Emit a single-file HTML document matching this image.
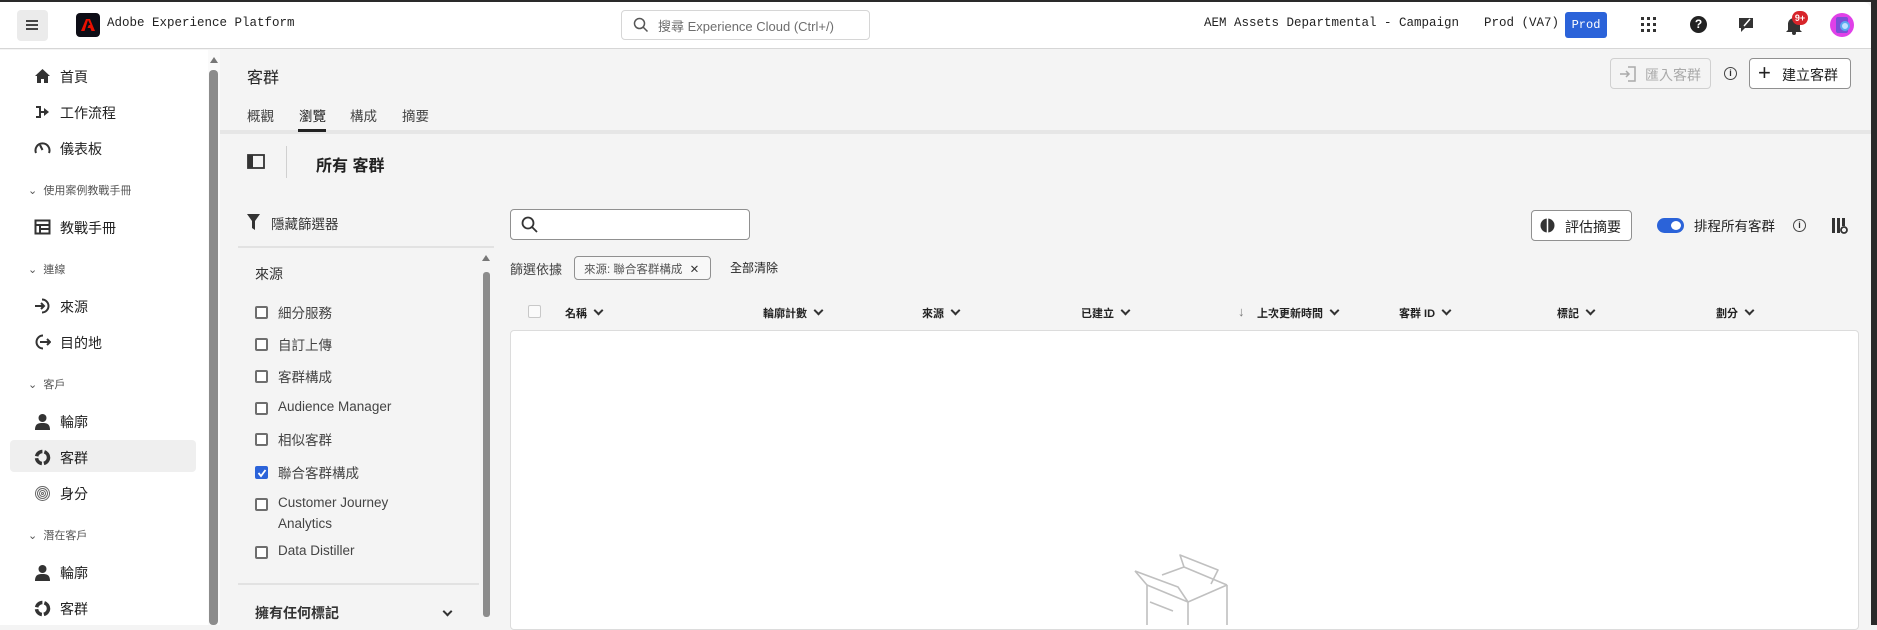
<!DOCTYPE html>
<html><head><meta charset="utf-8">
<style>
*{box-sizing:border-box;margin:0;padding:0}
body{width:1877px;height:625px;overflow:hidden;background:#f4f4f4;font-family:"Liberation Sans","Noto Sans CJK TC",sans-serif;color:#2c2c2c;position:relative;font-size:13px}
.a{position:absolute;white-space:nowrap}
.mono{font-family:"Liberation Mono","Noto Serif CJK SC",monospace;font-size:12.5px;color:#222}
.nav{font-size:14px;color:#222}
.sec{font-size:11px;color:#555}
.cb{position:absolute;width:13px;height:13px;border:2px solid #6e6e6e;border-radius:2px;background:#fff}
.it{font-size:13.5px;color:#444}
.th{font-size:11px;font-weight:bold;color:#222}
.chev{display:inline-block;width:7px;height:7px;border-right:2px solid #333;border-bottom:2px solid #333;transform:rotate(45deg);margin-left:8px;position:relative;top:-3px}
.btn{position:absolute;border:1px solid #909090;border-radius:4px;background:#fff;font-size:14px}
</style></head><body>
<div class="a" style="left:0;top:0;width:1877px;height:2px;background:#2a2a2a"></div>
<div class="a" style="left:1871px;top:0;width:6px;height:625px;background:#2a2a2a"></div>
<div class="a" style="left:0;top:2px;width:1871px;height:47px;background:#fff;border-bottom:1px solid #d6d6d6;border-top-right-radius:8px"></div>
<div class="a" style="left:17px;top:10px;width:31px;height:31px;background:#ebebeb;border-radius:4px"></div>
<div class="a" style="left:26px;top:20px;width:12px;height:2px;background:#444;box-shadow:0 4px 0 #444,0 8px 0 #444"></div>
<div class="a" style="left:76px;top:13px;width:24px;height:24px;background:#0d0d16;border-radius:4px"></div>
<svg class="a" style="left:80px;top:17px" width="16" height="16" viewBox="0 0 16 16"><path d="M6 2h4l5 12h-3.5l-1.2-3H7.5l1.3-3h1.6L8 3 4.5 14H1z" fill="#eb1000"/></svg>
<div class="a mono" style="left:107px;top:16px">Adobe Experience Platform</div>
<div class="a" style="left:621px;top:10px;width:249px;height:30px;border:1px solid #d6d6d6;border-radius:4px;background:#fff"></div>
<svg class="a" style="left:633px;top:17px" width="16" height="16"><circle cx="6.5" cy="6.5" r="5" fill="none" stroke="#555" stroke-width="1.5"/><path d="M10 10l4.5 4.5" stroke="#555" stroke-width="1.5"/></svg>
<div class="a" style="left:658px;top:16px;font-size:13px;color:#6e6e6e">搜尋 Experience Cloud (Ctrl+/)</div>
<div class="a mono" style="left:1204px;top:16px">AEM Assets Departmental - Campaign</div>
<div class="a mono" style="left:1484px;top:16px">Prod (VA7)</div>
<div class="a mono" style="left:1565px;top:12px;width:42px;height:26px;background:#2b63d9;border-radius:3px;color:#fff;text-align:center;line-height:26px;font-size:12px">Prod</div>
<svg class="a" style="left:1640px;top:16px" width="18" height="18"><g fill="#333"><rect x="1" y="1" width="3" height="3"/><rect x="7" y="1" width="3" height="3"/><rect x="13" y="1" width="3" height="3"/><rect x="1" y="7" width="3" height="3"/><rect x="7" y="7" width="3" height="3"/><rect x="13" y="7" width="3" height="3"/><rect x="1" y="13" width="3" height="3"/><rect x="7" y="13" width="3" height="3"/><rect x="13" y="13" width="3" height="3"/></g></svg>
<div class="a" style="left:1690px;top:16px;width:17px;height:17px;border-radius:50%;background:#222;color:#fff;font-size:12px;font-weight:bold;text-align:center;line-height:17px">?</div>
<svg class="a" style="left:1737px;top:15px" width="20" height="20"><path d="M2 3h14v10H8l-4 4v-4H2z" fill="#333"/><path d="M7 11l6-7" stroke="#fff" stroke-width="1.5"/></svg>
<svg class="a" style="left:1784px;top:15px" width="20" height="20"><path d="M4 15V9a6 6 0 0 1 12 0v6l2 2H2z" fill="#333"/><circle cx="10" cy="18" r="2" fill="#333"/></svg>
<div class="a" style="left:1792px;top:11px;width:16px;height:14px;background:#d7252b;border-radius:7px;color:#fff;font-size:9px;font-weight:bold;text-align:center;line-height:14px">9+</div>
<div class="a" style="left:1830px;top:13px;width:24px;height:24px;border-radius:50%;background:#e040e8"></div>
<div class="a" style="left:1836px;top:17px;width:12px;height:16px;background:#7b4fd6;border-radius:2px"></div>
<div class="a" style="left:1840px;top:21px;width:10px;height:10px;border-radius:50%;border:2px solid #5aa8f0;background:#bfe0ff"></div>
<div class="a" style="left:0;top:50px;width:208px;height:575px;background:#fff"></div>
<div class="a" style="left:208px;top:50px;width:12px;height:575px;background:#fafafa"></div>
<div class="a" style="left:209px;top:70px;width:9px;height:555px;background:#8c8c8c;border-radius:4px"></div>
<div class="a" style="left:210px;top:57px;width:0;height:0;border-left:4px solid transparent;border-right:4px solid transparent;border-bottom:6px solid #777"></div>
<div class="a" style="left:10px;top:440px;width:186px;height:32px;background:#efefef;border-radius:4px"></div>
<svg class="a" style="left:34px;top:68px" width="17" height="16"><path d="M8.5 1L1 8h2v7h4v-4h3v4h4V8h2z" fill="#333"/></svg>
<svg class="a" style="left:34px;top:104px" width="17" height="16"><path d="M2 2h5v5h3V4l5 4-5 4V9H7v5H2v-2h3V4H2z" fill="#333"/></svg>
<svg class="a" style="left:34px;top:140px" width="17" height="16"><path d="M2 13A7 7 0 1 1 15 13" fill="none" stroke="#333" stroke-width="2"/><path d="M8.5 10L6 5" stroke="#333" stroke-width="2"/></svg>
<svg class="a" style="left:34px;top:219px" width="17" height="16"><rect x="1.5" y="1.5" width="14" height="13" fill="none" stroke="#333" stroke-width="2"/><path d="M1.5 6h14M6 6v8.5M6 10h9" stroke="#333" stroke-width="2"/></svg>
<svg class="a" style="left:34px;top:298px" width="17" height="16"><path d="M8 1.5A6.5 6.5 0 1 1 8 14.5" fill="none" stroke="#333" stroke-width="2"/><path d="M1 8h9M7 5l3 3-3 3" fill="none" stroke="#333" stroke-width="2"/></svg>
<svg class="a" style="left:34px;top:334px" width="17" height="16"><path d="M9 1.5A6.5 6.5 0 1 0 9 14.5" fill="none" stroke="#333" stroke-width="2"/><path d="M6 8h10M13 5l3 3-3 3" fill="none" stroke="#333" stroke-width="2"/></svg>
<svg class="a" style="left:34px;top:413px" width="17" height="17"><circle cx="8.5" cy="5" r="4" fill="#333"/><path d="M1 17c0-6 3-7 7.5-7S16 11 16 17z" fill="#333"/></svg>
<svg class="a" style="left:34px;top:449px" width="17" height="17"><circle cx="8.5" cy="8.5" r="6" fill="none" stroke="#333" stroke-width="3.5" stroke-dasharray="8 2"/></svg>
<svg class="a" style="left:34px;top:485px" width="17" height="17"><g fill="none" stroke="#666" stroke-width="1"><circle cx="8.5" cy="8.5" r="7"/><circle cx="8.5" cy="8.5" r="5"/><circle cx="8.5" cy="8.5" r="3"/><circle cx="8.5" cy="8.5" r="1"/></g></svg>
<svg class="a" style="left:34px;top:564px" width="17" height="17"><circle cx="8.5" cy="5" r="4" fill="#333"/><path d="M1 17c0-6 3-7 7.5-7S16 11 16 17z" fill="#333"/></svg>
<svg class="a" style="left:34px;top:600px" width="17" height="17"><circle cx="8.5" cy="8.5" r="6" fill="none" stroke="#333" stroke-width="3.5" stroke-dasharray="8 2"/></svg>
<div class="a nav" style="left:60px;top:67px">首頁</div>
<div class="a nav" style="left:60px;top:103px">工作流程</div>
<div class="a nav" style="left:60px;top:139px">儀表板</div>
<div class="a sec" style="left:28px;top:182px">⌄&nbsp;&nbsp;使用案例教戰手冊</div>
<div class="a nav" style="left:60px;top:218px">教戰手冊</div>
<div class="a sec" style="left:28px;top:261px">⌄&nbsp;&nbsp;連線</div>
<div class="a nav" style="left:60px;top:297px">來源</div>
<div class="a nav" style="left:60px;top:333px">目的地</div>
<div class="a sec" style="left:28px;top:376px">⌄&nbsp;&nbsp;客戶</div>
<div class="a nav" style="left:60px;top:412px">輪廓</div>
<div class="a nav" style="left:60px;top:448px">客群</div>
<div class="a nav" style="left:60px;top:484px">身分</div>
<div class="a sec" style="left:28px;top:527px">⌄&nbsp;&nbsp;潛在客戶</div>
<div class="a nav" style="left:60px;top:563px">輪廓</div>
<div class="a nav" style="left:60px;top:599px">客群</div>
<div class="a" style="left:247px;top:64px;font-size:16px;color:#222">客群</div>
<div class="a" style="left:247px;top:105px;font-size:13.5px;color:#444">概觀</div>
<div class="a" style="left:299px;top:105px;font-size:13.5px;color:#222">瀏覽</div>
<div class="a" style="left:350px;top:105px;font-size:13.5px;color:#444">構成</div>
<div class="a" style="left:402px;top:105px;font-size:13.5px;color:#444">摘要</div>
<div class="a" style="left:220px;top:130px;width:1651px;height:4px;background:#e6e6e6"></div>
<div class="a" style="left:298px;top:129px;width:28px;height:3px;background:#222"></div>
<div class="btn" style="left:1610px;top:58px;width:101px;height:31px;border-color:#d0d0d0;background:#f4f4f4;color:#aaa;padding:6px 0 0 34px">匯入客群</div>
<svg class="a" style="left:1619px;top:65px" width="18" height="18"><path d="M1 9h9M7 6l3 3-3 3" fill="none" stroke="#aaa" stroke-width="1.5"/><path d="M9 2h7v14H9" fill="none" stroke="#aaa" stroke-width="1.5"/></svg>
<div class="a" style="left:1724px;top:67px;width:13px;height:13px;border:1.5px solid #444;border-radius:50%;font-size:9px;text-align:center;line-height:10px;font-weight:bold">i</div>
<div class="btn" style="left:1749px;top:58px;width:102px;height:31px;color:#222;padding:6px 0 0 32px">建立客群</div>
<div class="a" style="left:1758px;top:60px;font-size:22px;color:#222">+</div>
<svg class="a" style="left:247px;top:154px" width="18" height="15"><rect x="1" y="1" width="16" height="13" fill="none" stroke="#333" stroke-width="1.8"/><rect x="1" y="1" width="5" height="13" fill="#333"/></svg>
<div class="a" style="left:286px;top:146px;width:1px;height:32px;background:#d0d0d0"></div>
<div class="a" style="left:316px;top:152px;font-size:16px;font-weight:bold;color:#222">所有 客群</div>
<svg class="a" style="left:247px;top:214px" width="13" height="16"><path d="M0 0h13L8 7v9l-3-2V7z" fill="#333"/></svg>
<div class="a" style="left:271px;top:213px;font-size:13.5px;color:#333">隱藏篩選器</div>
<div class="a" style="left:238px;top:246px;width:256px;height:2px;background:#e2e2e2"></div>
<div class="a" style="left:483px;top:272px;width:7px;height:345px;background:#8c8c8c;border-radius:3px"></div>
<div class="a" style="left:482px;top:255px;width:0;height:0;border-left:4px solid transparent;border-right:4px solid transparent;border-bottom:6px solid #777"></div>
<div class="a" style="left:255px;top:264px;font-size:14px;color:#333">來源</div>
<div class="cb" style="left:255px;top:306px"></div><div class="a it" style="left:278px;top:302px">細分服務</div>
<div class="cb" style="left:255px;top:338px"></div><div class="a it" style="left:278px;top:334px">自訂上傳</div>
<div class="cb" style="left:255px;top:370px"></div><div class="a it" style="left:278px;top:366px">客群構成</div>
<div class="cb" style="left:255px;top:402px"></div><div class="a it" style="left:278px;top:399px">Audience Manager</div>
<div class="cb" style="left:255px;top:433px"></div><div class="a it" style="left:278px;top:429px">相似客群</div>
<div class="cb" style="left:255px;top:466px;background:#2b63d9;border-color:#2b63d9"></div><svg class="a" style="left:257px;top:468px" width="10" height="10"><path d="M1.5 5l2.5 3 4.5-6" fill="none" stroke="#fff" stroke-width="1.8"/></svg><div class="a it" style="left:278px;top:462px">聯合客群構成</div>
<div class="cb" style="left:255px;top:498px"></div><div class="a it" style="left:278px;top:495px">Customer Journey</div>
<div class="a it" style="left:278px;top:516px">Analytics</div>
<div class="cb" style="left:255px;top:546px"></div><div class="a it" style="left:278px;top:543px">Data Distiller</div>
<div class="a" style="left:238px;top:583px;width:241px;height:2px;background:#e2e2e2"></div>
<div class="a" style="left:255px;top:603px;font-size:14px;font-weight:bold;color:#333">擁有任何標記</div>
<div class="a" style="left:444px;top:606px"><span class="chev" style="margin:0"></span></div>
<div class="a" style="left:510px;top:209px;width:240px;height:31px;border:1px solid #909090;border-radius:4px;background:#fff"></div>
<svg class="a" style="left:521px;top:216px" width="17" height="17"><circle cx="7" cy="7" r="5.5" fill="none" stroke="#333" stroke-width="1.8"/><path d="M11 11l5 5" stroke="#333" stroke-width="1.8"/></svg>
<div class="a" style="left:510px;top:259px;font-size:13px;color:#444">篩選依據</div>
<div class="a" style="left:574px;top:256px;width:137px;height:24px;border:1px solid #909090;border-radius:4px;background:#f8f8f8;font-size:11.5px;color:#555;padding:4px 0 0 9px">來源: 聯合客群構成 <span style="color:#333;margin-left:4px">✕</span></div>
<div class="a" style="left:730px;top:259px;font-size:12px;color:#222">全部清除</div>
<div class="btn" style="left:1531px;top:210px;width:101px;height:31px;color:#222;padding:6px 0 0 33px">評估摘要</div>
<svg class="a" style="left:1540px;top:218px" width="15" height="15"><circle cx="7.5" cy="7.5" r="7" fill="#333"/><path d="M7.5 0.5v14" stroke="#fff" stroke-width="1.5"/></svg>
<div class="a" style="left:1657px;top:218px;width:27px;height:15px;border-radius:8px;background:#2b63d9"></div>
<div class="a" style="left:1671px;top:221px;width:10px;height:9px;border-radius:50%;background:#fff"></div>
<div class="a" style="left:1694px;top:215px;font-size:13.5px;color:#222">排程所有客群</div>
<div class="a" style="left:1793px;top:219px;width:13px;height:13px;border:1.5px solid #444;border-radius:50%;font-size:9px;text-align:center;line-height:10px;font-weight:bold">i</div>
<svg class="a" style="left:1831px;top:217px" width="18" height="18"><rect x="1" y="1" width="3" height="15" fill="#333"/><rect x="6" y="1" width="3" height="15" fill="#333"/><rect x="11" y="1" width="3" height="8" fill="#333"/><circle cx="13" cy="13" r="3" fill="none" stroke="#333" stroke-width="1.8"/></svg>
<div class="cb" style="left:528px;top:305px;border-color:#c8c8c8;border-width:1.5px;background:#fafafa"></div>
<div class="a th" style="left:565px;top:305px">名稱<span class="chev"></span></div>
<div class="a th" style="left:763px;top:305px">輪廓計數<span class="chev"></span></div>
<div class="a th" style="left:922px;top:305px">來源<span class="chev"></span></div>
<div class="a th" style="left:1081px;top:305px">已建立<span class="chev"></span></div>
<div class="a th" style="left:1238px;top:304px;font-weight:normal;color:#777;font-size:13px">↓</div>
<div class="a th" style="left:1257px;top:305px">上次更新時間<span class="chev"></span></div>
<div class="a th" style="left:1399px;top:305px">客群 ID<span class="chev"></span></div>
<div class="a th" style="left:1557px;top:305px">標記<span class="chev"></span></div>
<div class="a th" style="left:1716px;top:305px">劃分<span class="chev"></span></div>
<div class="a" style="left:510px;top:330px;width:1349px;height:300px;background:#fff;border:1px solid #dcdcdc;border-radius:4px"></div>
<svg class="a" style="left:1130px;top:550px" width="110" height="75"><g fill="none" stroke="#c0c0c0" stroke-width="1.6" stroke-linejoin="round"><path d="M5 21l12 14v40"/><path d="M5 21l43 16 10 15"/><path d="M58 52v25"/><path d="M17 35l41 17 39-17"/><path d="M97 35v40"/><path d="M54 17l-4 -12 38 15-7 14"/><path d="M54 17l43 18"/><path d="M54 17l-22 8"/><path d="M20 52l23 9"/></g></svg>
</body></html>
